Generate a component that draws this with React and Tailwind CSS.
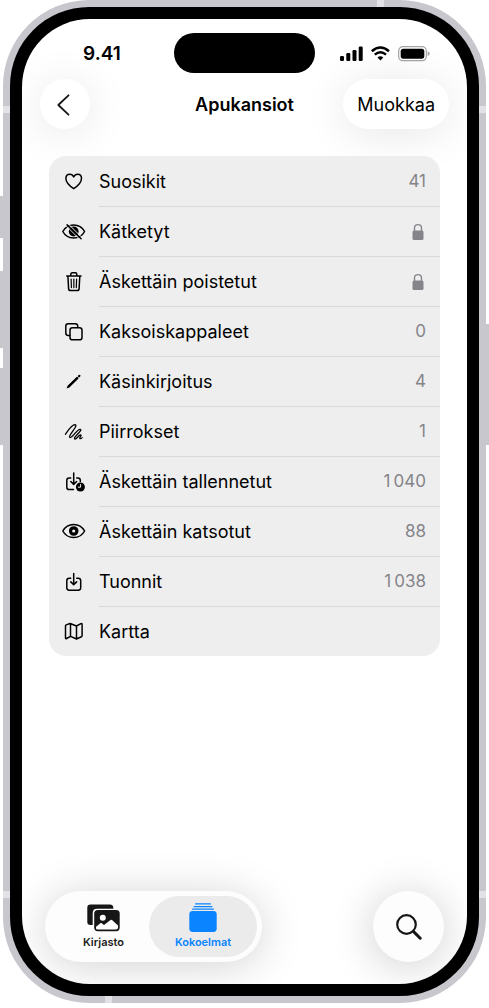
import React from 'react';

const stroke = {
  fill: 'none',
  stroke: 'currentColor',
  strokeWidth: 1.5,
  strokeLinecap: 'round',
  strokeLinejoin: 'round',
};

function Icon({ children }) {
  return (
    <svg viewBox="0 0 24 24" className="size-6 shrink-0 overflow-visible" aria-hidden="true" {...stroke}>
      {children}
    </svg>
  );
}

const icons = {
  heart: (
    <path d="M11.700 19.700C8 17.200 3.900 13.500 3.900 9.500C3.900 7 5.600 5.300 7.800 5.300C9.600 5.300 10.900 6.300 11.700 8C12.500 6.300 13.800 5.300 15.600 5.300C17.800 5.300 19.500 7 19.500 9.500C19.500 13.500 15.400 17.200 11.700 19.700Z" />
  ),
  hidden: (
    <>
      <path d="M0.800 12.500C2.600 9.200 6.700 6 11.700 6S20.800 9.200 22.600 12.500C20.800 15.800 16.700 19 11.700 19S2.600 15.800 0.800 12.500Z" />
      <circle cx="11.700" cy="12.500" r="4.900" fill="currentColor" stroke="none" />
      <path d="M4.200 6.900L18 20.500M6.200 4.900L20 18.500" stroke="#eeeeee" strokeWidth="1" />
      <path d="M5.100 5.900L19.100 19.700" />
    </>
  ),
  trash: (
    <>
      <path d="M4.700 7H19M8.800 6.800V5.300Q8.800 3.800 10.300 3.800H13.300Q14.800 3.800 14.800 5.300V6.800M5.900 7.200L6.600 19.600Q6.700 21.500 8.600 21.500H15.100Q17 21.500 17.100 19.600L17.800 7.200" />
      <path d="M9.100 10L9.400 18.600M11.850 10V18.600M14.600 10L14.300 18.600" strokeWidth="1.200" />
    </>
  ),
  copies: (
    <>
      <path d="M7.800 16.400H6.200Q3.800 16.400 3.800 14V7.100Q3.800 4.700 6.200 4.700H13.300Q15.700 4.700 15.700 7.100V8.600" />
      <rect x="8" y="8.800" width="12" height="12" rx="2.400" />
    </>
  ),
  pencil: (
    <>
      <path d="M5.500 17L15.300 7.700L16.600 9L7.100 18.500L4.600 19.400Z" fill="currentColor" stroke="none" />
      <path d="M6.400 17.700L15.700 8.600" strokeWidth="2.200" strokeLinecap="butt" />
      <path d="M17.100 7.100L17.400 6.800" strokeWidth="2.200" />
    </>
  ),
  scribble: (
    <path
      strokeWidth="1.300"
      d="M3.400 15.300C6.500 11 9.800 5.700 12.900 5.700C17.300 5.900 5.500 16.900 7.900 18.500C10 19.800 14.800 10.200 18.100 10.300C21.700 10.700 10.400 18.700 12.700 20C14.500 20.900 16.700 15.700 18.600 15.900C20.200 16.200 16.800 19 18 19.600C18.700 19.900 19.500 19.300 20.200 18.600"
    />
  ),
  recentSave: (
    <>
      <path d="M8.700 8.900H7.200Q4.800 8.900 4.800 11.300V18.200Q4.800 20.600 7.200 20.600H11.500M14.700 8.900H15.900Q18.300 8.900 18.300 11.300V12.500M11.700 4V15M8.800 12.500L11.700 15.400L14.600 12.500" />
      <circle cx="18.400" cy="18" r="4.500" fill="currentColor" stroke="none" />
      <path d="M18.600 15.500V18.200H16.400" stroke="#eeeeee" strokeWidth="1" />
    </>
  ),
  eye: (
    <>
      <path d="M0.800 12C2.600 8.700 6.700 5.400 11.700 5.400S20.800 8.700 22.600 12C20.800 15.300 16.700 18.600 11.700 18.600S2.600 15.300 0.800 12Z" />
      <circle cx="11.700" cy="12" r="3.200" strokeWidth="3.200" />
    </>
  ),
  imports: (
    <path d="M8.700 9.300H7.200Q4.800 9.300 4.800 11.700V18.800Q4.800 21.200 7.200 21.200H16.300Q18.700 21.200 18.700 18.800V11.700Q18.700 9.300 16.300 9.300H14.700M11.700 4.500V15.400M8.800 12.900L11.700 15.800L14.600 12.900" />
  ),
  map: (
    <path d="M3.500 6.900Q3.500 6.200 4.100 5.900L8.100 4.500L14.500 7L18.900 4.600Q20.100 4.200 20.100 5.400V16.400Q20.100 17.300 19.400 17.700L14.500 20L8.600 17.400L4.500 19.500Q3.500 20 3.500 18.800ZM8.500 4.800V17.400M14.500 7V20" />
  ),
};

const rows = [
  { label: 'Suosikit', icon: 'heart', count: '41' },
  { label: 'Kätketyt', icon: 'hidden', locked: true },
  { label: 'Äskettäin poistetut', icon: 'trash', locked: true },
  { label: 'Kaksoiskappaleet', icon: 'copies', count: '0' },
  { label: 'Käsinkirjoitus', icon: 'pencil', count: '4' },
  { label: 'Piirrokset', icon: 'scribble', count: '1' },
  { label: 'Äskettäin tallennetut', icon: 'recentSave', count: '1\u2009040' },
  { label: 'Äskettäin katsotut', icon: 'eye', count: '88' },
  { label: 'Tuonnit', icon: 'imports', count: '1\u2009038' },
  { label: 'Kartta', icon: 'map' },
];

function Lock() {
  return (
    <svg viewBox="0 0 12 18" className="mr-0.5 h-[18px] w-3" aria-hidden="true">
      <path d="M2.500 8V5Q2.500 1.600 6 1.600T9.500 5V8" fill="none" stroke="#85848a" strokeWidth="1.400" />
      <rect x="0.500" y="7.500" width="11" height="9.500" rx="1.500" fill="#85848a" />
    </svg>
  );
}

function StatusBar() {
  return (
    <div className="grid h-10 grid-cols-[1fr_141px_1fr] items-center">
      <span className="pt-0.5 pl-2 text-center text-[19px] font-semibold">9.41</span>
      <div className="h-10 rounded-full bg-black" />
      <div className="justify-self-end pt-0.5 pr-[37px]">
        <svg viewBox="0 0 90 16" className="h-4 w-[90px]" aria-hidden="true">
          <rect x="0" y="10" width="4" height="5" rx="1.200" />
          <rect x="6.300" y="7" width="4" height="8" rx="1.200" />
          <rect x="12.500" y="4" width="4" height="11" rx="1.200" />
          <rect x="18.700" y="0.500" width="4" height="14.500" rx="1.200" />
          <path d="M31.800 5.200Q40.400 -2.300 49 5.200" fill="none" stroke="#000" strokeWidth="2.500" />
          <path d="M34.800 8.600Q40.400 3.800 46 8.600" fill="none" stroke="#000" strokeWidth="2.500" />
          <path d="M37.500 11.500Q40.400 9.100 43.300 11.500L40.400 14.600Z" />
          <rect x="58.700" y="0.700" width="27.600" height="14" rx="4.200" fill="none" stroke="#a5a5a5" strokeWidth="1.200" />
          <rect x="60.700" y="2.700" width="23.600" height="10" rx="2.600" />
          <path d="M87.600 5.300Q89.800 6.200 89.800 7.700T87.600 10.100Z" fill="#a5a5a5" />
        </svg>
      </div>
    </div>
  );
}

function Tabs() {
  return (
    <nav className="mt-auto flex items-center justify-between px-[23px] pb-[22px]">
      <div className="flex h-[71px] items-center rounded-full bg-[#fdfdfd] p-[5px] shadow-[0_4px_44px_rgba(0,0,0,0.18)]">
        <a href="#kirjasto" className="flex h-full w-[99px] flex-col items-center pt-2 pl-2 text-[#1c1c22]">
          <svg viewBox="0 0 33 28" className="h-7 w-[33px]" aria-hidden="true">
            <path d="M3.500 0.500H23Q26 0.500 26.300 3.500V4.700H10Q5.700 4.700 5.700 9V21H3.500Q0.300 21 0.300 17.800V3.700Q0.300 0.500 3.500 0.500Z" fill="#161617" />
            <rect x="7.200" y="6" width="25.500" height="21.200" rx="3.600" fill="#161617" />
            <circle cx="15.800" cy="13.800" r="3" fill="#fff" />
            <path d="M9 24.300V22.800L14 18.700L17 21L23.500 15.900Q24.200 15.500 25 16L31 21.500V23.500Q31 25.500 29 25.500H10.300Q9 25.500 9 24.300Z" fill="#fff" />
          </svg>
          <span className="text-[11px] leading-5 font-semibold">Kirjasto</span>
        </a>
        <a href="#kokoelmat" aria-current="page" className="flex h-full w-[108px] flex-col items-center rounded-full bg-[#ebebeb] pt-[7px] text-[#0a84ff]">
          <svg viewBox="0 0 28 29" className="h-[29px] w-7" fill="#0a84ff" aria-hidden="true">
            <rect x="6" y="0.200" width="16" height="1.300" rx="0.600" />
            <rect x="4.500" y="2.900" width="19" height="1.300" rx="0.600" />
            <rect x="3" y="5.500" width="22" height="1.300" rx="0.600" />
            <rect x="0.300" y="8" width="27.400" height="21" rx="3.400" />
          </svg>
          <span className="text-[11px] leading-5 font-semibold">Kokoelmat</span>
        </a>
      </div>
      <button aria-label="Etsi" className="grid size-[71px] place-items-center rounded-full bg-[#fdfdfd] shadow-[0_4px_44px_rgba(0,0,0,0.2)]">
        <svg viewBox="0 0 26 26" className="size-[26px]" fill="none" stroke="#161617" strokeLinecap="round" aria-hidden="true">
          <circle cx="10.500" cy="10.500" r="9.300" strokeWidth="2.200" />
          <path d="M17.600 17.600L24.200 24.200" strokeWidth="3" />
        </svg>
      </button>
    </nav>
  );
}

function FrameParts() {
  return (
    <div aria-hidden="true">
      <div className="absolute top-[196px] left-0 h-[42px] w-[3px] bg-[#c8c7cd]" />
      <div className="absolute top-[271px] left-0 h-[77px] w-[3px] bg-[#c8c7cd]" />
      <div className="absolute top-[368px] left-0 h-[77px] w-[3px] bg-[#c8c7cd]" />
      <div className="absolute top-[324px] right-0 h-[121px] w-[3px] bg-[#c8c7cd]" />
      <div className="absolute top-[106px] left-[3px] h-[7px] w-[7px] bg-[#e2e1e5]" />
      <div className="absolute top-[106px] right-[3px] h-[7px] w-[7px] bg-[#e2e1e5]" />
      <div className="absolute bottom-[110px] left-[3px] h-[7px] w-[7px] bg-[#e2e1e5]" />
      <div className="absolute right-[3px] bottom-[110px] h-[7px] w-[7px] bg-[#e2e1e5]" />
      <div className="absolute top-0 right-[105px] h-[7px] w-[7px] bg-[#e2e1e5]" />
      <div className="absolute bottom-[5px] left-[105px] h-[7px] w-[7px] bg-[#e2e1e5]" />
    </div>
  );
}

export default function App() {
  return (
    <div className="relative flex min-h-screen bg-white px-[3px] pb-[5px] font-['Inter',sans-serif] text-black">
      <div className="flex flex-1 rounded-[86px] bg-[#c8c7cd] p-[7px]">
        <div className="flex flex-1 rounded-[79px] bg-black p-3">
          <div className="flex flex-1 flex-col overflow-hidden rounded-[68px] bg-white pt-3.5">
            <StatusBar />
            <header className="mt-1.5 grid grid-cols-[1fr_auto_1fr] items-center px-[18px]">
              <button aria-label="Takaisin" className="grid size-[50px] place-items-center rounded-full bg-white pt-0.5 shadow-[0_4px_44px_rgba(0,0,0,0.1)]">
                <svg viewBox="0 0 14 22" className="mr-1 h-[22px] w-3.5" fill="none" stroke="#161617" strokeWidth="1.800" strokeLinecap="round" strokeLinejoin="round" aria-hidden="true">
                  <path d="M12.500 1.300L2.300 11L12.500 20.700" />
                </svg>
              </button>
              <h1 className="pt-0.5 text-lg font-semibold">Apukansiot</h1>
              <button className="h-[50px] justify-self-end rounded-full bg-white px-3.5 pt-0.5 text-lg shadow-[0_4px_44px_rgba(0,0,0,0.1)]">
                Muokkaa
              </button>
            </header>
            <ul className="mx-[27px] mt-[27px] mb-10 overflow-hidden rounded-[17px] bg-[#eeeeee]">
              {rows.map((row, i) => (
                <li key={row.label}>
                  <a href={'#' + row.icon} className="flex h-[50px] items-stretch">
                    <span className="grid w-[50px] shrink-0 place-items-center">
                      <Icon>{icons[row.icon]}</Icon>
                    </span>
                    <span
                      className={
                        'flex flex-1 items-center justify-between border-t pr-3.5 ' +
                        (i > 0 ? 'border-[#d9d9da]' : 'border-transparent')
                      }
                    >
                      <span className="text-lg">{row.label}</span>
                      {row.locked ? <Lock /> : <span className="text-[17px] text-[#85848a]">{row.count}</span>}
                    </span>
                  </a>
                </li>
              ))}
            </ul>
            <Tabs />
          </div>
        </div>
      </div>
      <FrameParts />
    </div>
  );
}
